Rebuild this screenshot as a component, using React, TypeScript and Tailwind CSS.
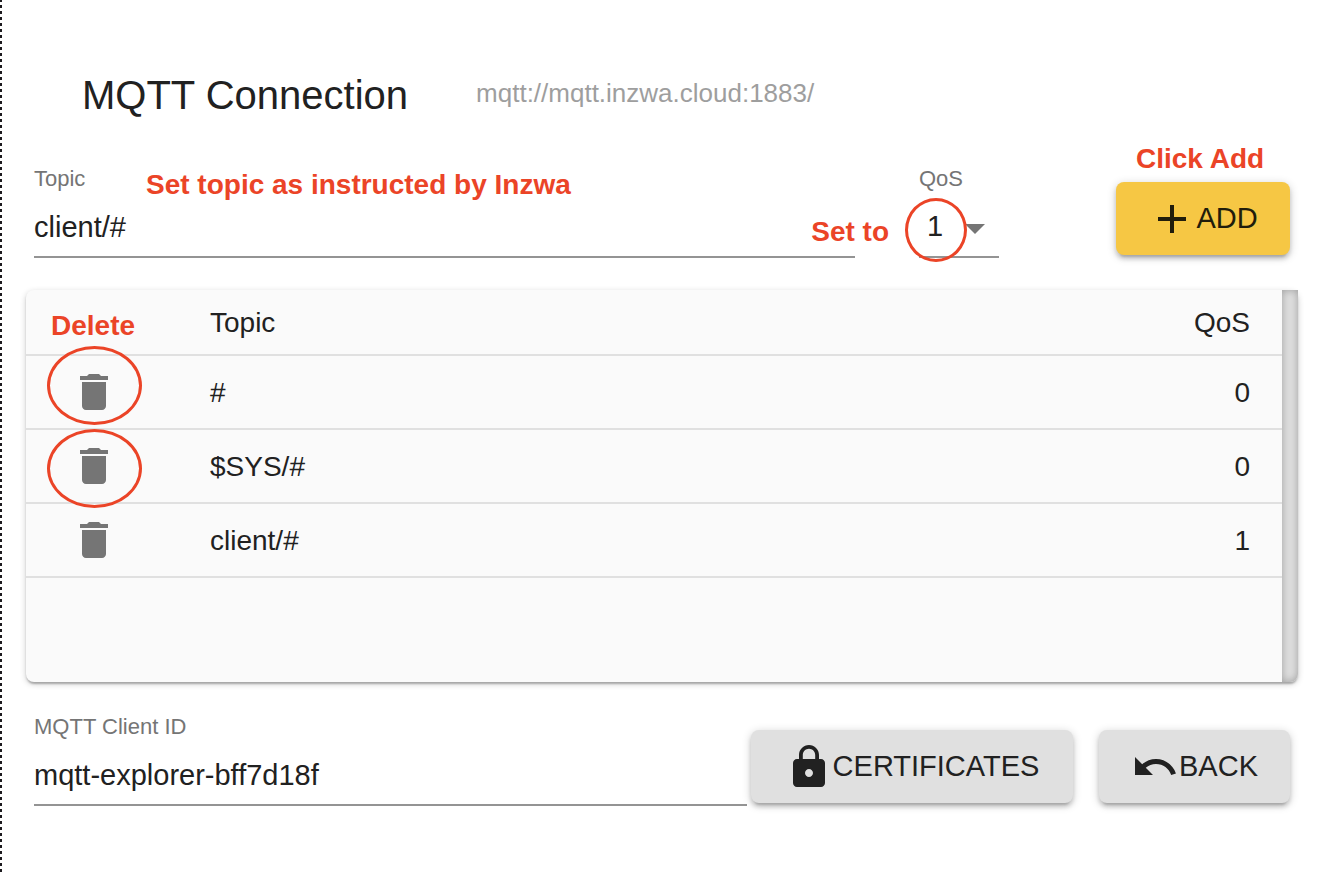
import { useState } from "react";
import type { ReactNode } from "react";
import { MdAdd, MdArrowDropDown, MdDelete, MdLock } from "react-icons/md";

const SUBSCRIPTIONS = [
  { topic: "#", qos: 0, marked: true },
  { topic: "$SYS/#", qos: 0, marked: true },
  { topic: "client/#", qos: 1, marked: false },
];

const RAISED =
  "shadow-[0_2px_10px_rgba(0,0,0,0.2),0_4px_4px_rgba(0,0,0,0.14),0_6px_2px_-4px_rgba(0,0,0,0.12)]";

function Note({ className, children }: { className: string; children: ReactNode }) {
  return (
    <span
      className={`pointer-events-none absolute z-10 text-[28px] leading-8 font-bold whitespace-nowrap text-[#eb4427] ${className}`}
    >
      {children}
    </span>
  );
}

function Ring({ className }: { className: string }) {
  return (
    <span
      aria-hidden="true"
      className={`pointer-events-none absolute z-10 rounded-[50%] border-3 border-[#eb4427] ${className}`}
    />
  );
}

function UndoIcon() {
  return (
    <svg viewBox="0 0 24 24" className="size-12 shrink-0" fill="currentColor" aria-hidden="true">
      <path d="M12.5 8c-2.65 0-5.05.99-6.9 2.6L2 7v9h9l-3.62-3.62c1.39-1.16 3.16-1.88 5.12-1.88 3.54 0 6.55 2.31 7.6 5.5l2.37-.78C21.08 11.03 17.15 8 12.5 8z" />
    </svg>
  );
}

function TextField({ id, label, value }: { id: string; label: string; value: string }) {
  const [text, setText] = useState(value);
  return (
    <div className="flex min-w-0 flex-1 flex-col">
      <label htmlFor={id} className="text-[22px] leading-[26px] text-[#757575]">
        {label}
      </label>
      <input
        id={id}
        value={text}
        onChange={(e) => setText(e.target.value)}
        className="h-[66px] w-full border-b-2 border-[#949494] bg-transparent pt-2.5 pb-1 text-[29px] text-[#212121] outline-none"
      />
    </div>
  );
}

export default function App() {
  const [qos, setQos] = useState("1");

  return (
    <main className="relative min-h-screen bg-white pr-[22px] pb-16 pl-[26px] font-['Liberation_Sans',Arial,sans-serif] text-[#212121]">
      <span
        aria-hidden="true"
        className="absolute top-0 bottom-0.5 left-0 w-0.5 bg-[repeating-linear-gradient(to_bottom,#1c1a1e_0_2px,#fff_2px_5px,#1c1a1e_5px_6px)]"
      />

      <header className="flex items-start pt-[72px] pl-14">
        <h1 className="text-[40px] leading-[46px]">MQTT Connection</h1>
        <p className="ml-[68px] text-[26px] leading-[42px] text-[#9e9e9e]">mqtt://mqtt.inzwa.cloud:1883/</p>
      </header>

      <form className="mt-12" onSubmit={(e) => e.preventDefault()}>
        <div className="relative flex px-2">
          <TextField id="topic" label="Topic" value="client/#" />
          <Note className="top-[3px] left-[120px]">Set topic as instructed by Inzwa</Note>

          <div className="relative ml-16 flex w-20 flex-col">
            <label htmlFor="qos" className="text-[22px] leading-[26px] text-[#757575]">
              QoS
            </label>
            <select
              id="qos"
              value={qos}
              onChange={(e) => setQos(e.target.value)}
              className="h-[66px] w-full appearance-none border-b-2 border-[#949494] bg-transparent pt-2.5 pb-1 pl-2 text-[29px] text-[#212121] outline-none"
            >
              <option>0</option>
              <option>1</option>
              <option>2</option>
            </select>
            <MdArrowDropDown className="pointer-events-none absolute top-[38px] right-0 size-12 text-[#757575]" />
            <Note className="top-[50px] right-[110px]">Set to</Note>
            <Ring className="top-8 -left-3.5 h-16 w-[62px]" />
          </div>

          <div className="relative ml-[117px] pt-4">
            <Note className="-top-[23px] left-5">Click Add</Note>
            <button
              type="submit"
              className={`flex h-[73px] w-[174px] items-center justify-center rounded-lg bg-[#f6c744] text-[29px] text-[#211d0b] ${RAISED}`}
            >
              <MdAdd className="size-12 shrink-0" />
              ADD
            </button>
          </div>
        </div>

        <section className="mt-8 flex h-[392px] rounded-lg bg-[#fafafa] shadow-[0_2px_6px_rgba(0,0,0,0.2),0_2px_2px_rgba(0,0,0,0.14),0_4px_2px_-2px_rgba(0,0,0,0.12)]">
          <div className="min-w-0 flex-1">
            <table className="w-full border-collapse text-[28px]">
              <thead>
                <tr className="h-[65px] border-b-2 border-[#e0e0e0]">
                  <th aria-label="Delete" className="relative w-[184px] p-0">
                    <Note className="top-5 left-[25px]">Delete</Note>
                  </th>
                  <th className="p-0 pt-0.5 text-left font-normal">Topic</th>
                  <th className="p-0 pt-0.5 pr-8 text-right font-normal">QoS</th>
                </tr>
              </thead>
              <tbody>
                {SUBSCRIPTIONS.map((row, i) => (
                  <tr key={row.topic} className="h-[74px] border-b-2 border-[#e0e0e0]">
                    <td className="relative p-0 pl-11">
                      <button type="button" aria-label={`Delete ${row.topic}`} className="block text-[#757575]">
                        <MdDelete className="size-12" />
                      </button>
                      {row.marked && (
                        <Ring className={`left-[21px] h-[79px] w-[95px] ${i === 0 ? "-top-2.5" : "-top-px"}`} />
                      )}
                    </td>
                    <td className="p-0 pt-0.5">{row.topic}</td>
                    <td className="p-0 pt-0.5 pr-8 text-right">{row.qos}</td>
                  </tr>
                ))}
              </tbody>
            </table>
          </div>
          <div
            aria-hidden="true"
            className="w-4 rounded-br-lg bg-[#dfdfdf] shadow-[inset_0_0_8px_rgba(0,0,0,0.3)]"
          />
        </section>

        <div className="mt-8 flex px-2">
          <TextField id="client-id" label="MQTT Client ID" value="mqtt-explorer-bff7d18f" />
          <div className="ml-1 flex gap-[26px] pt-4">
            <button
              type="button"
              className={`flex h-[73px] w-[322px] items-center justify-center rounded-lg bg-[#e0e0e0] text-[29px] ${RAISED}`}
            >
              <MdLock className="size-12 shrink-0" />
              CERTIFICATES
            </button>
            <button
              type="button"
              className={`flex h-[73px] w-[191px] items-center justify-center rounded-lg bg-[#e0e0e0] text-[29px] ${RAISED}`}
            >
              <UndoIcon />
              BACK
            </button>
          </div>
        </div>
      </form>
    </main>
  );
}
